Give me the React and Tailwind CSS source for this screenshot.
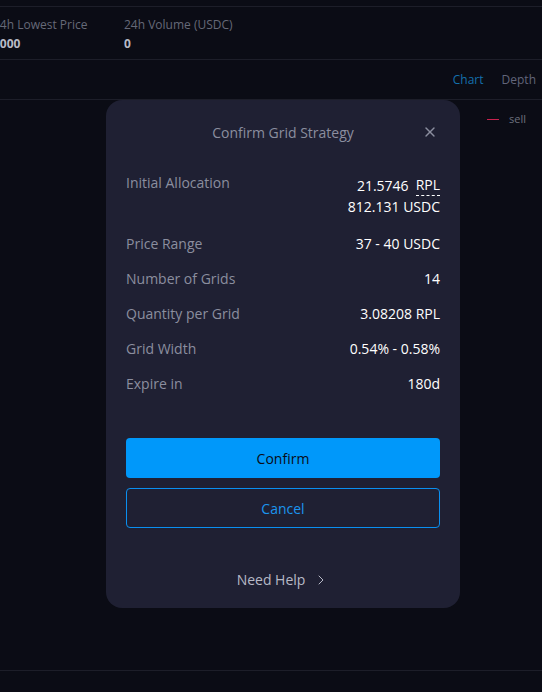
import { X, ChevronRight } from "lucide-react";

const rows = [
  { label: "Price Range", value: "37 - 40 USDC" },
  { label: "Number of Grids", value: "14" },
  { label: "Quantity per Grid", value: "3.08208 RPL" },
  { label: "Grid Width", value: "0.54% - 0.58%" },
  { label: "Expire in", value: "180d" },
];

const App = () => {
  return (
    <main
      className="relative h-[692px] w-[542px] overflow-hidden bg-[#0b0c15] text-white"
      style={{ fontFamily: '"Open Sans", "Noto Sans", sans-serif' }}
    >
      <div className="h-[7px] border-b border-[#1d1e29]"></div>

      {/* market stats */}
      <div className="flex h-[53px] border-b border-[#1d1e29] pt-[8px] text-[12px]">
        <div className="ml-[-7px] w-[131px]">
          <div className="leading-[20px] text-[#666978]">24h Lowest Price</div>
          <div className="font-bold leading-[18px] text-[#b8bac6]">0000</div>
        </div>
        <div>
          <div className="leading-[20px] text-[#666978]">24h Volume (USDC)</div>
          <div className="font-bold leading-[18px] text-[#b8bac6]">0</div>
        </div>
      </div>

      {/* tabs */}
      <div className="flex h-[40px] items-center justify-end gap-[18px] border-b border-[#1d1e29] pr-[6px] text-[12px]">
        <span className="text-[#1470ad]">Chart</span>
        <span className="text-[#62657a]">Depth</span>
      </div>

      {/* chart area */}
      <div className="flex h-[571px] items-start justify-end border-b border-[#1d1e29] pr-[16px] pt-[11px]">
        <div className="flex items-center gap-[10px] text-[11px] text-[#6d707e]">
          <span className="block h-[1px] w-[12px] shrink-0 bg-[#c8224e]"></span>
          <span>sell</span>
        </div>
      </div>

      {/* modal */}
      <div className="absolute left-[106px] top-[100px] flex h-[508px] w-[354px] flex-col rounded-[16px] bg-[#1f2033] px-[20px]">
        <div className="relative flex h-[64px] items-center justify-center pt-[1px]">
          <span className="text-[14px] text-[#8b8e9f]">Confirm Grid Strategy</span>
          <X className="absolute right-[2px] top-[24px] h-[16px] w-[16px] text-[#8b8e9f]" strokeWidth={2} />
        </div>

        <div className="flex flex-col text-[14px]">
          <div className="flex h-[70px] justify-between pt-[9px]">
            <span className="leading-[20px] text-[#8b8e9f]">Initial Allocation</span>
            <div className="flex flex-col items-end pt-[3px]">
              <div className="flex leading-[20px]">
                <span>21.5746</span>
                <span className="ml-[7px] border-b border-dashed border-white leading-[18px]">RPL</span>
              </div>
              <span className="leading-[22px]">812.131 USDC</span>
            </div>
          </div>
          {rows.map((row) => (
            <div key={row.label} className="flex h-[35px] items-start justify-between">
              <span className="leading-[20px] text-[#8b8e9f]">{row.label}</span>
              <span className="leading-[20px]">{row.value}</span>
            </div>
          ))}
        </div>

        <button className="mt-[29px] h-[40px] w-full rounded-[4px] bg-[#0098fa] text-[14px] text-[#0b0c15]">
          Confirm
        </button>
        <button className="mt-[10px] h-[40px] w-full rounded-[4px] border border-[#0a8ff0] text-[14px] text-[#1b95ee]">
          Cancel
        </button>

        <div className="mt-[41px] flex items-center justify-center gap-[8px] text-[14px] text-[#b7b9c6]">
          <span>Need Help</span>
          <ChevronRight className="h-[16px] w-[16px]" strokeWidth={1.5} />
        </div>
      </div>
    </main>
  );
};

export default App;
